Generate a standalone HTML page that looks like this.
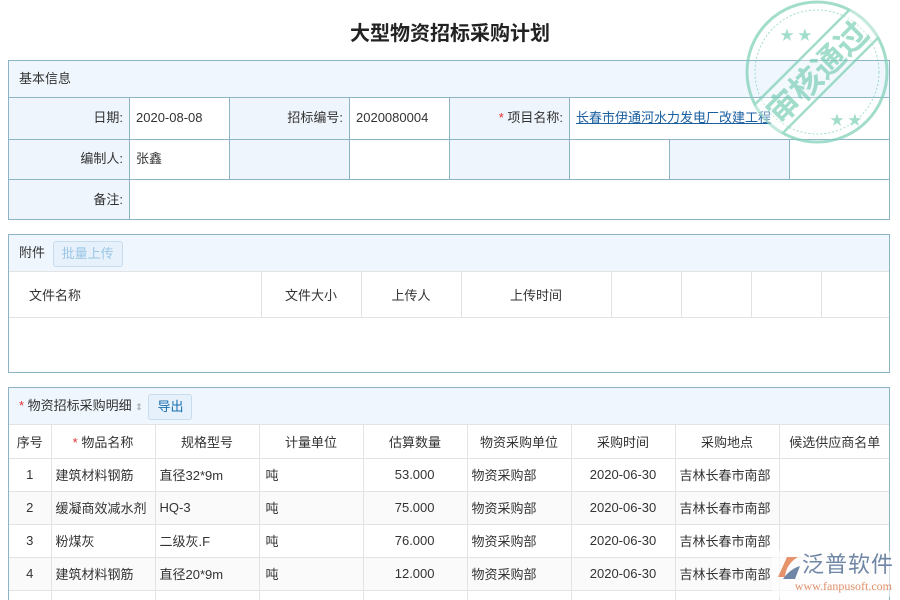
<!DOCTYPE html>
<html style="overflow:hidden;height:600px"><head><meta charset="utf-8"><style>
*{margin:0;padding:0;box-sizing:border-box}
body{width:900px;height:600px;overflow:hidden;background:#fff;font-family:"Liberation Sans","Noto Sans CJK SC",sans-serif;font-size:13px;color:#333;position:relative}
.title{position:absolute;top:17px;left:0;width:900px;text-align:center;font-size:20px;font-weight:bold;color:#222}
.box{position:absolute;left:8px;width:882px;border:1px solid #8db4c6;background:#fff;overflow:hidden}
.hd{background:#eff6fd;height:37px;border-bottom:1px solid #8db4c6;padding-left:10px;line-height:36px;position:relative}
.c{position:absolute;border-right:1px solid #8db4c6;border-bottom:1px solid #8db4c6;line-height:40px;padding:0 6px}
.l{background:#eef5fc;text-align:right}
a{color:#1a5fa0;text-decoration:underline}
.req{color:#e03030}
table{border-collapse:collapse;position:absolute;left:0}
td,th{border-right:1px solid #e3e3e3;border-bottom:1px solid #e3e3e3;font-weight:normal;white-space:nowrap;overflow:hidden}
.btn{display:inline-block;border:1px solid #c7dcee;background:#e6f1fb;border-radius:3px;padding:0 8px;line-height:24px;vertical-align:middle}
</style></head><body>
<div class="title">大型物资招标采购计划</div>

<div class="box" style="top:60px;height:160px">
 <div class="hd" style="border-color:#8db4c6">基本信息</div>
 <div class="c l" style="left:0;top:37px;width:121px;height:42px">日期:</div>
 <div class="c" style="left:121px;top:37px;width:100px;height:42px">2020-08-08</div>
 <div class="c l" style="left:221px;top:37px;width:120px;height:42px">招标编号:</div>
 <div class="c" style="left:341px;top:37px;width:100px;height:42px">2020080004</div>
 <div class="c l" style="left:441px;top:37px;width:120px;height:42px"><span class="req">*</span> 项目名称:</div>
 <div class="c" style="left:561px;top:37px;width:321px;height:42px;border-right:none"><a>长春市伊通河水力发电厂改建工程</a></div>
 <div class="c l" style="left:0;top:79px;width:121px;height:40px;line-height:38px">编制人:</div>
 <div class="c" style="left:121px;top:79px;width:100px;height:40px;line-height:38px">张鑫</div>
 <div class="c l" style="left:221px;top:79px;width:120px;height:40px"></div>
 <div class="c" style="left:341px;top:79px;width:100px;height:40px"></div>
 <div class="c l" style="left:441px;top:79px;width:120px;height:40px"></div>
 <div class="c" style="left:561px;top:79px;width:100px;height:40px"></div>
 <div class="c l" style="left:661px;top:79px;width:120px;height:40px"></div>
 <div class="c" style="left:781px;top:79px;width:101px;height:40px;border-right:none"></div>
 <div class="c l" style="left:0;top:119px;width:121px;height:40px;border-bottom:none">备注:</div>
</div>

<div class="box" style="top:234px;height:139px">
 <div class="hd" style="border-bottom-color:#e3e3e3">附件 <span class="btn" style="color:#9cc6e6;margin-left:4px">批量上传</span></div>
 <table style="top:37px;width:881px"><tr style="height:45px">
 <td style="width:252px;padding-left:20px">文件名称</td><td style="width:100px;text-align:center">文件大小</td><td style="width:100px;text-align:center">上传人</td><td style="width:150px;text-align:center">上传时间</td><td style="width:70px"></td><td style="width:70px"></td><td style="width:70px"></td><td style="border-right:none"></td></tr></table>
</div>

<div class="box" style="top:387px;height:220px;border-bottom:none">
 <div class="hd" style="border-bottom-color:#e3e3e3"><span class="req">*</span> 物资招标采购明细 <span style="color:#999;font-size:9px">⇕</span> <span class="btn" style="color:#1a6fb0;margin-left:2px">导出</span></div>
 <table style="top:37px;width:881px">
 <tr style="height:33px;text-align:center"><td style="width:42px">序号</td><td style="width:104px"><span class="req">*</span> 物品名称</td><td style="width:104px">规格型号</td><td style="width:104px">计量单位</td><td style="width:104px">估算数量</td><td style="width:104px">物资采购单位</td><td style="width:104px">采购时间</td><td style="width:104px">采购地点</td><td style="border-right:none">候选供应商名单</td></tr>
 <tr style="height:33px"><td style="text-align:center">1</td><td style="padding-left:4px">建筑材料钢筋</td><td style="padding-left:4px">直径32*9m</td><td style="padding-left:6px">吨</td><td style="text-align:right;padding-right:32px">53.000</td><td style="padding-left:4px">物资采购部</td><td style="text-align:center">2020-06-30</td><td style="padding-left:4px">吉林长春市南部</td><td style="border-right:none"></td></tr>
 <tr style="height:33px;background:#fafafa"><td style="text-align:center">2</td><td style="padding-left:4px">缓凝商效减水剂</td><td style="padding-left:4px">HQ-3</td><td style="padding-left:6px">吨</td><td style="text-align:right;padding-right:32px">75.000</td><td style="padding-left:4px">物资采购部</td><td style="text-align:center">2020-06-30</td><td style="padding-left:4px">吉林长春市南部</td><td style="border-right:none"></td></tr>
 <tr style="height:33px"><td style="text-align:center">3</td><td style="padding-left:4px">粉煤灰</td><td style="padding-left:4px">二级灰.F</td><td style="padding-left:6px">吨</td><td style="text-align:right;padding-right:32px">76.000</td><td style="padding-left:4px">物资采购部</td><td style="text-align:center">2020-06-30</td><td style="padding-left:4px">吉林长春市南部</td><td style="border-right:none"></td></tr>
 <tr style="height:33px;background:#fafafa"><td style="text-align:center">4</td><td style="padding-left:4px">建筑材料钢筋</td><td style="padding-left:4px">直径20*9m</td><td style="padding-left:6px">吨</td><td style="text-align:right;padding-right:32px">12.000</td><td style="padding-left:4px">物资采购部</td><td style="text-align:center">2020-06-30</td><td style="padding-left:4px">吉林长春市南部</td><td style="border-right:none"></td></tr>
 <tr style="height:33px"><td style="text-align:center">5</td><td style="padding-left:4px">钢板</td><td style="padding-left:4px">Q345</td><td style="padding-left:6px">吨</td><td style="text-align:right;padding-right:32px">50.000</td><td style="padding-left:4px">物资采购部</td><td style="text-align:center">2020-06-30</td><td style="padding-left:4px">吉林长春市南部</td><td style="border-right:none"></td></tr>
 </table>
</div>

<svg style="position:absolute;left:740px;top:0" width="160" height="150" viewBox="0 0 160 150">
 <defs><clipPath id="cp"><circle cx="77" cy="72" r="71"/></clipPath></defs>
 <g opacity="0.7" fill="none" stroke="#7ccfb6">
  <circle cx="77" cy="72" r="70" stroke-width="3"/>
  <circle cx="77" cy="72" r="62" stroke-width="1" stroke-dasharray="2 2"/>
  <g transform="rotate(-45 77 72)">
   <rect x="0" y="51" width="155" height="40" stroke-width="2.5" fill="#fff" fill-opacity="0.4" clip-path="url(#cp)"/>
   <text x="77" y="84" text-anchor="middle" font-size="32" font-weight="bold" fill="#7ccfb6" stroke="none" font-family="Liberation Sans,Noto Sans CJK SC,sans-serif">审核通过</text>
  </g>
  <text x="40" y="40" fill="#7ccfb6" stroke="none" font-size="14">★ ★</text>
  <text x="90" y="125" fill="#7ccfb6" stroke="none" font-size="14">★ ★</text>
 </g>
</svg>

<div style="position:absolute;left:772px;top:551px;width:122px;height:46px;background:rgba(255,255,255,0.6)">
 <svg width="28" height="28" style="position:absolute;left:2px;top:2px"><path d="M4 24 L13 4 L24 4 Q12 11 11 24Z" fill="#e6936b"/><path d="M9 26 Q16 16 26 13 L21 26Z" fill="#6f86a6"/></svg>
 <div style="margin-left:30px;font-size:22px;color:#6f86a6;line-height:28px;letter-spacing:1px">泛普软件</div>
 <div style="font-family:'Liberation Serif',serif;font-size:12px;color:#e0906a;text-align:right;line-height:14px;padding-right:2px">www.fanpusoft.com</div>
</div>
</body></html>
